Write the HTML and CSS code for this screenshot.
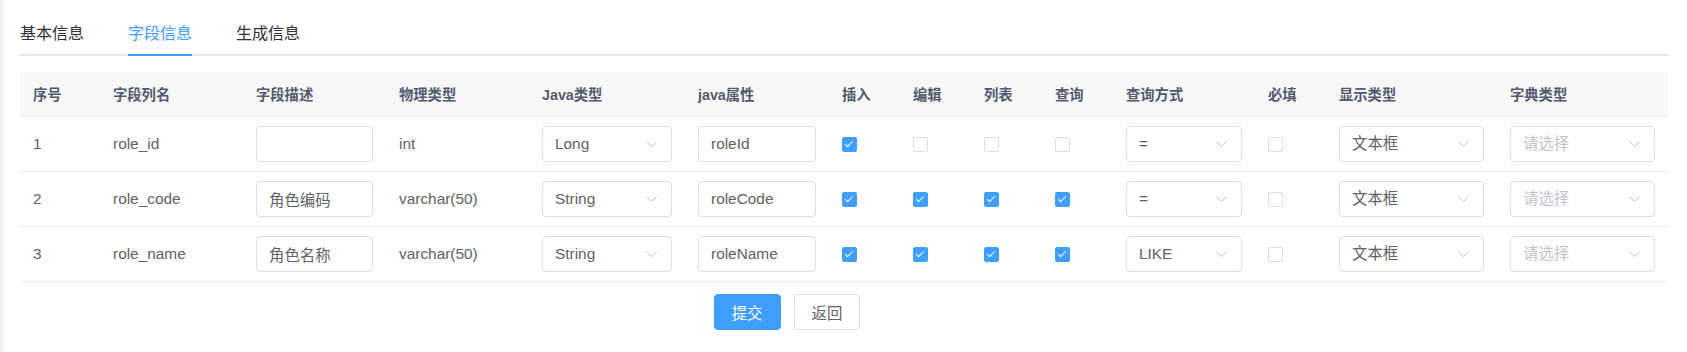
FILE: index.html
```html
<!DOCTYPE html>
<html lang="zh-CN">

<head>
    <meta charset="UTF-8">
    <meta name="viewport" content="width=device-width, initial-scale=1.0">
    <title>修改生成配置</title>
    <link rel="stylesheet" href="styles.css">
</head>

<body>
    <div class="app-container">
        <!-- 标签页 -->
        <div class="tabs-header">
            <div class="tab">基本信息</div>
            <div class="tab active">字段信息</div>
            <div class="tab">生成信息</div>
        </div>

        <!-- 字段信息表格 -->
        <table class="field-table">
            <colgroup>
                <col style="width: 80px">
                <col style="width: 143px">
                <col style="width: 143px">
                <col style="width: 143px">
                <col style="width: 156px">
                <col style="width: 144px">
                <col style="width: 71px">
                <col style="width: 71px">
                <col style="width: 71px">
                <col style="width: 71px">
                <col style="width: 142px">
                <col style="width: 71px">
                <col style="width: 171px">
                <col style="width: 171px">
            </colgroup>
            <thead>
                <tr>
                    <th>序号</th>
                    <th>字段列名</th>
                    <th>字段描述</th>
                    <th>物理类型</th>
                    <th>Java类型</th>
                    <th>java属性</th>
                    <th>插入</th>
                    <th>编辑</th>
                    <th>列表</th>
                    <th>查询</th>
                    <th>查询方式</th>
                    <th>必填</th>
                    <th>显示类型</th>
                    <th>字典类型</th>
                </tr>
            </thead>
            <tbody>
                <tr>
                    <td>1</td>
                    <td>role_id</td>
                    <td><input class="input" type="text" value=""></td>
                    <td>int</td>
                    <td>
                        <div class="select">Long<svg width="11" height="6" viewBox="0 0 11 6"><polyline points="0.5,0.5 5.5,5.5 10.5,0.5" /></svg></div>
                    </td>
                    <td><input class="input" type="text" value="roleId"></td>
                    <td><span class="checkbox checked"></span></td>
                    <td><span class="checkbox"></span></td>
                    <td><span class="checkbox"></span></td>
                    <td><span class="checkbox"></span></td>
                    <td>
                        <div class="select">=<svg width="11" height="6" viewBox="0 0 11 6"><polyline points="0.5,0.5 5.5,5.5 10.5,0.5" /></svg></div>
                    </td>
                    <td><span class="checkbox"></span></td>
                    <td>
                        <div class="select">文本框<svg width="11" height="6" viewBox="0 0 11 6"><polyline points="0.5,0.5 5.5,5.5 10.5,0.5" /></svg></div>
                    </td>
                    <td>
                        <div class="select placeholder">请选择<svg width="11" height="6" viewBox="0 0 11 6"><polyline points="0.5,0.5 5.5,5.5 10.5,0.5" /></svg></div>
                    </td>
                </tr>
                <tr>
                    <td>2</td>
                    <td>role_code</td>
                    <td><input class="input" type="text" value="角色编码"></td>
                    <td>varchar(50)</td>
                    <td>
                        <div class="select">String<svg width="11" height="6" viewBox="0 0 11 6"><polyline points="0.5,0.5 5.5,5.5 10.5,0.5" /></svg></div>
                    </td>
                    <td><input class="input" type="text" value="roleCode"></td>
                    <td><span class="checkbox checked"></span></td>
                    <td><span class="checkbox checked"></span></td>
                    <td><span class="checkbox checked"></span></td>
                    <td><span class="checkbox checked"></span></td>
                    <td>
                        <div class="select">=<svg width="11" height="6" viewBox="0 0 11 6"><polyline points="0.5,0.5 5.5,5.5 10.5,0.5" /></svg></div>
                    </td>
                    <td><span class="checkbox"></span></td>
                    <td>
                        <div class="select">文本框<svg width="11" height="6" viewBox="0 0 11 6"><polyline points="0.5,0.5 5.5,5.5 10.5,0.5" /></svg></div>
                    </td>
                    <td>
                        <div class="select placeholder">请选择<svg width="11" height="6" viewBox="0 0 11 6"><polyline points="0.5,0.5 5.5,5.5 10.5,0.5" /></svg></div>
                    </td>
                </tr>
                <tr>
                    <td>3</td>
                    <td>role_name</td>
                    <td><input class="input" type="text" value="角色名称"></td>
                    <td>varchar(50)</td>
                    <td>
                        <div class="select">String<svg width="11" height="6" viewBox="0 0 11 6"><polyline points="0.5,0.5 5.5,5.5 10.5,0.5" /></svg></div>
                    </td>
                    <td><input class="input" type="text" value="roleName"></td>
                    <td><span class="checkbox checked"></span></td>
                    <td><span class="checkbox checked"></span></td>
                    <td><span class="checkbox checked"></span></td>
                    <td><span class="checkbox checked"></span></td>
                    <td>
                        <div class="select">LIKE<svg width="11" height="6" viewBox="0 0 11 6"><polyline points="0.5,0.5 5.5,5.5 10.5,0.5" /></svg></div>
                    </td>
                    <td><span class="checkbox"></span></td>
                    <td>
                        <div class="select">文本框<svg width="11" height="6" viewBox="0 0 11 6"><polyline points="0.5,0.5 5.5,5.5 10.5,0.5" /></svg></div>
                    </td>
                    <td>
                        <div class="select placeholder">请选择<svg width="11" height="6" viewBox="0 0 11 6"><polyline points="0.5,0.5 5.5,5.5 10.5,0.5" /></svg></div>
                    </td>
                </tr>
            </tbody>
        </table>

        <!-- 操作按钮 -->
        <div class="form-footer">
            <button class="btn btn-primary" type="button">提交</button>
            <button class="btn" type="button">返回</button>
        </div>
    </div>
</body>

</html>
```

FILE: styles.css
```css
/* 页面基础样式 */
body {
    margin: 0;
    font-family: "Liberation Sans", "Noto Sans CJK SC", sans-serif;
    background-color: #fff;
    color: #606266;
}

.app-container {
    min-height: 352px;
    box-sizing: border-box;
    padding: 14px 19px 0 20px;
    box-shadow: inset 6px 0 6px -4px rgba(0, 0, 0, 0.1);
}

/* 标签页 */
.tabs-header {
    display: flex;
    gap: 44px;
    height: 40px;
    border-bottom: 2px solid #e4e7ed;
    margin-bottom: 16px;
}

.tab {
    position: relative;
    font-size: 16px;
    line-height: 40px;
    color: #303133;
}

.tab.active {
    color: #409eff;
}

.tab.active::after {
    content: "";
    position: absolute;
    left: 0;
    right: 0;
    bottom: -2px;
    height: 2px;
    background-color: #409eff;
}

/* 表格 */
.field-table {
    width: 100%;
    table-layout: fixed;
    border-collapse: collapse;
    font-size: 15.4px;
}

.field-table th,
.field-table td {
    padding: 0 13px;
    text-align: left;
    vertical-align: middle;
    border-bottom: 1px solid #ebeef5;
}

.field-table thead tr {
    height: 44px;
}

.field-table th {
    background-color: #f8f8f9;
    color: #515a6e;
    font-size: 14.3px;
    font-weight: bold;
}

.field-table tbody tr {
    height: 55px;
}

.field-table td {
    color: #606266;
}

/* 输入框 */
.input {
    display: block;
    width: 100%;
    height: 36px;
    box-sizing: border-box;
    padding: 0 12px;
    border: 1px solid #dcdfe6;
    border-radius: 4px;
    font-family: inherit;
    font-size: 15.4px;
    color: #606266;
    background-color: #fff;
    outline: none;
}

/* 下拉框 */
.select {
    position: relative;
    height: 36px;
    box-sizing: border-box;
    padding: 0 30px 0 12px;
    border: 1px solid #dcdfe6;
    border-radius: 4px;
    line-height: 34px;
    color: #606266;
    background-color: #fff;
}

.select.placeholder {
    color: #c0c4cc;
}

.select svg {
    position: absolute;
    right: 14px;
    top: 14px;
    fill: none;
    stroke: #c0c4cc;
    stroke-width: 1;
}

/* 复选框 */
.checkbox {
    position: relative;
    display: inline-block;
    width: 15px;
    height: 15px;
    box-sizing: border-box;
    border: 1px solid #dcdfe6;
    border-radius: 2px;
    background-color: #fff;
    vertical-align: middle;
}

.checkbox.checked {
    background-color: #409eff;
    border-color: #409eff;
}

.checkbox.checked::after {
    content: "";
    position: absolute;
    left: 4px;
    top: 1px;
    width: 3px;
    height: 7px;
    border: 1px solid #fff;
    border-left: 0;
    border-top: 0;
    transform: rotate(45deg);
}

/* 底部按钮 */
.form-footer {
    display: flex;
    justify-content: center;
    gap: 13px;
    padding-right: 114px;
    margin-top: 12px;
}

.btn {
    height: 36px;
    padding: 0 17px;
    border: 1px solid #dcdfe6;
    border-radius: 4px;
    background-color: #fff;
    color: #606266;
    font-family: inherit;
    font-size: 15.4px;
    cursor: pointer;
}

.btn-primary {
    background-color: #409eff;
    border-color: #409eff;
    color: #fff;
}
```
